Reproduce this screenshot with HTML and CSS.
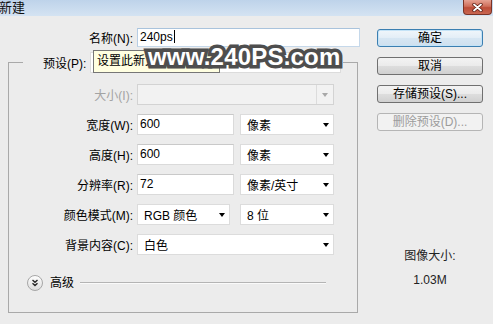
FILE: index.html
```html
<!DOCTYPE html>
<html lang="zh-CN">
<head>
    <meta charset="UTF-8" />
    <title>新建</title>
    <link rel="stylesheet" href="styles.css">
</head>
<body>
<div class="window">
    <div class="titlebar">
        <span class="title">新建</span>
        <span class="close">
            <svg width="11" height="9" viewBox="0 0 11 9">
                <path d="M2 1.5 L9 7.5 M9 1.5 L2 7.5" stroke="#5a1c12" stroke-width="3.4" stroke-linecap="round" />
                <path d="M2 1.5 L9 7.5 M9 1.5 L2 7.5" stroke="#fff" stroke-width="1.8" stroke-linecap="round" />
            </svg>
        </span>
    </div>

    <div class="dialog">
        <div class="main">
            <div class="name-row">
                <label class="lbl">名称(N):</label>
                <div class="field name-field">240ps<span class="caret"></span></div>
            </div>

            <fieldset class="group">
                <legend class="preset">
                    <span class="lbl">预设(P):</span>
                    <div class="combo preset-combo"><span class="arrow"></span></div>
                </legend>

                <div class="rows">
                    <label class="lbl off">大小(I):</label>
                    <div class="combo disabled"><span class="drop"><span class="arrow"></span></span></div>

                    <label class="lbl">宽度(W):</label>
                    <div class="pair">
                        <div class="field num">600</div>
                        <div class="combo unit">像素<span class="arrow"></span></div>
                    </div>

                    <label class="lbl">高度(H):</label>
                    <div class="pair">
                        <div class="field num">600</div>
                        <div class="combo unit">像素<span class="arrow"></span></div>
                    </div>

                    <label class="lbl">分辨率(R):</label>
                    <div class="pair">
                        <div class="field num">72</div>
                        <div class="combo unit">像素/英寸<span class="arrow"></span></div>
                    </div>

                    <label class="lbl">颜色模式(M):</label>
                    <div class="pair">
                        <div class="combo mode">RGB 颜色<span class="arrow"></span></div>
                        <div class="combo unit">8 位<span class="arrow"></span></div>
                    </div>

                    <label class="lbl">背景内容(C):</label>
                    <div class="combo">白色<span class="arrow"></span></div>
                </div>

                <div class="advanced">
                    <svg class="adv-icon" width="16" height="16" viewBox="0 0 16 16">
                        <defs>
                            <linearGradient id="advg" x1="0" y1="0" x2="0" y2="1">
                                <stop offset="0" stop-color="#ffffff" />
                                <stop offset="1" stop-color="#dcdcdc" />
                            </linearGradient>
                        </defs>
                        <circle cx="8" cy="8" r="7.5" fill="url(#advg)" stroke="#a6a6a6" />
                        <path d="M5.5 5 L8 7.3 L10.5 5 M5.5 8.3 L8 10.6 L10.5 8.3" fill="none" stroke="#2a2a2a" stroke-width="1.4" />
                    </svg>
                    <span class="adv-text">高级</span>
                    <span class="adv-line"></span>
                </div>
            </fieldset>
        </div>

        <div class="side">
            <button class="btn default">确定</button>
            <button class="btn">取消</button>
            <button class="btn">存储预设(S)...</button>
            <button class="btn" disabled>删除预设(D)...</button>

            <div class="info">
                <p>图像大小:</p>
                <p class="size">1.03M</p>
            </div>
        </div>
    </div>

    <div class="tooltip">设置此新文档的名称</div>
    <div class="watermark">www.240PS.com</div>
</div>
</body>
</html>
```

FILE: styles.css
```css
* {
    box-sizing: border-box;
    margin: 0;
    padding: 0;
}

body {
    margin: 0;
    font-family: 'Liberation Sans', 'Noto Sans CJK SC', sans-serif;
    font-size: 12px;
    color: #000;
    background: #ececec;
}

.window {
    position: relative;
    width: 493px;
    height: 324px;
    overflow: hidden;
    background: #ececec;
}

/* 标题栏 */
.titlebar {
    display: flex;
    align-items: flex-start;
    height: 16px;
    background: linear-gradient(#bed3ea, #d4e3f2);
}

.title {
    margin-left: -1px;
    font-size: 13px;
    line-height: 15px;
    color: #111;
}

.close {
    margin-left: auto;
    margin-right: 1px;
    width: 29px;
    height: 15px;
    display: flex;
    align-items: center;
    justify-content: center;
    background: linear-gradient(#e6a293, #cf6e5a 45%, #bd4c37 55%, #c96752);
    border: 1px solid #7a3326;
    border-top: none;
    border-radius: 0 0 4px 4px;
}

.dialog {
    display: flex;
    padding: 12px 0 0 8px;
}

.main {
    width: 352px;
}

.lbl {
    text-align: right;
    white-space: nowrap;
}

.lbl.off {
    color: #a3a3a3;
}

.name-row {
    display: grid;
    grid-template-columns: 125px 223px;
    column-gap: 4px;
    align-items: center;
    height: 19px;
}

.field {
    height: 21px;
    line-height: 19px;
    padding: 0 2px;
    background: #fff;
    border: 1px solid #dadada;
    border-top-color: #c9c9c9;
    white-space: nowrap;
}

.name-field {
    height: 19px;
    line-height: 17px;
    border-color: #a9c3dc #c5d8ea #c5d8ea #b6cde4;
}

.caret {
    display: inline-block;
    width: 1px;
    height: 13px;
    margin-left: 1px;
    background: #000;
    vertical-align: -2px;
}

/* 分组框 */
.group {
    width: 350px;
    margin-top: 5px;
    padding: 0 0 21px 0;
    border: 1px solid #a9a9a9;
    min-inline-size: auto;
}

.preset {
    display: flex;
    align-items: center;
    height: 21px;
    margin-left: 14px;
    padding: 0 2px;
}

.preset .lbl {
    margin-left: 18px;
}

.preset-combo {
    width: 251px;
    margin-left: 4px;
}

.rows {
    display: grid;
    grid-template-columns: 124px 197px;
    column-gap: 4px;
    row-gap: 9px;
    align-items: center;
    margin-top: 11px;
}

.pair {
    display: flex;
    justify-content: space-between;
}

.num {
    width: 97px;
}

.combo {
    display: flex;
    align-items: center;
    height: 21px;
    padding: 0 4px 0 6px;
    background: #fff;
    border: 1px solid #dcdcdc;
    white-space: nowrap;
}

.combo.unit {
    width: 94px;
}

.combo.mode {
    width: 93px;
}

.arrow {
    margin-left: auto;
    width: 0;
    height: 0;
    border-top: 4px solid #000;
    border-left: 3.5px solid transparent;
    border-right: 3.5px solid transparent;
}

.combo.disabled {
    padding: 0;
    background: #f2f2f2;
    border-color: #d3d3d3;
}

.drop {
    display: flex;
    align-items: center;
    justify-content: center;
    width: 17px;
    height: 100%;
    margin-left: auto;
    border-left: 1px solid #dcdcdc;
}

.drop .arrow {
    margin: 0;
    border-top-color: #a8a8a8;
}

.advanced {
    display: flex;
    align-items: center;
    height: 16px;
    margin-top: 20px;
    margin-left: 18px;
}

.adv-text {
    margin-left: 7px;
    line-height: 16px;
}

.adv-line {
    width: 246px;
    height: 2px;
    margin-left: 6px;
    border-top: 1px solid #b4b4b4;
    border-bottom: 1px solid #fafafa;
}

/* 右侧按钮 */
.side {
    display: flex;
    flex-direction: column;
    gap: 10px;
    width: 106px;
    margin-left: 17px;
    padding-top: 1px;
}

.btn {
    height: 18px;
    font-family: inherit;
    font-size: 12px;
    line-height: 16px;
    color: #000;
    border: 1px solid #707070;
    border-radius: 3px;
    background: linear-gradient(#f3f3f3, #ebebeb 48%, #dddddd 52%, #d0d0d0);
}

.btn.default {
    border-color: #3c7fb1;
    background: linear-gradient(#f0f6fb, #e3eef7 48%, #d6e6f3 52%, #cfe0ee);
    box-shadow: inset 0 0 0 1px #c4e3f7;
}

.btn:disabled {
    color: #9c9c9c;
    border-color: #b5b5b5;
    background: #f2f2f2;
}

.info {
    margin-top: 108px;
    text-align: center;
    line-height: 14px;
    color: #222;
}

.info .size {
    margin-top: 10px;
}

/* 浮层 */
.tooltip {
    position: absolute;
    left: 93px;
    top: 50px;
    width: 127px;
    height: 23px;
    padding: 0 3px;
    line-height: 21px;
    background: #ffffe1;
    border: 1px solid #767676;
    white-space: nowrap;
    overflow: hidden;
}

.watermark {
    position: absolute;
    left: 148px;
    top: 45px;
    font-family: 'Liberation Sans', sans-serif;
    font-weight: bold;
    font-size: 24px;
    line-height: 24px;
    letter-spacing: 0.2px;
    color: #fff;
    -webkit-text-stroke: 7px #4e4e4e;
    paint-order: stroke fill;
    white-space: nowrap;
}
```
